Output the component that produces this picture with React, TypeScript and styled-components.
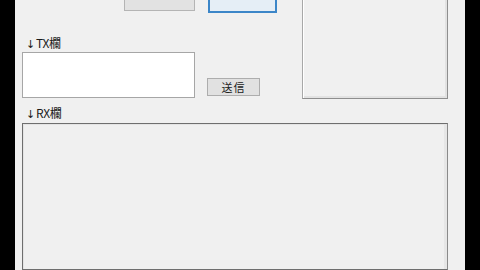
import styled, { createGlobalStyle } from "styled-components";

const GlobalStyle = createGlobalStyle`
  html, body {
    margin: 0;
    padding: 0;
    width: 480px;
    height: 270px;
    overflow: hidden;
    background: #000;
  }
`;

const Screen = styled.div`
  width: 480px;
  height: 270px;
  background: #000;
  display: flex;
  justify-content: flex-start;
  overflow: hidden;
`;

const Window = styled.div`
  margin-left: 15px;
  width: 450px;
  height: 270px;
  background: #f0f0f0;
  padding: 0 17px 0 7px;
  box-sizing: border-box;
  display: flex;
  flex-direction: column;
  font-family: "Noto Sans CJK JP", "Liberation Sans", sans-serif;
  font-size: 12px;
  color: #1a1a1a;
  overflow: hidden;
`;

const TopRow = styled.div`
  display: flex;
  margin-top: -12px;
`;

const LeftColumn = styled.div`
  width: 281px;
  display: flex;
  flex-direction: column;
`;

const ButtonRow = styled.div`
  display: flex;
  height: 24px;
  align-items: flex-start;
`;

const WinButton = styled.div<{ $w: number; $h: number; $ml: number; $focused?: boolean; $disabled?: boolean }>`
  width: ${(p) => p.$w}px;
  height: ${(p) => p.$h}px;
  margin-left: ${(p) => p.$ml}px;
  box-sizing: border-box;
  border: ${(p) => (p.$focused ? "2px solid #3c86c8" : "1px solid #b4b4b4")};
  background: ${(p) => (p.$focused ? "#e5eef6" : p.$disabled ? "#e2e2e2" : "#e1e1e1")};
  display: flex;
  align-items: center;
  justify-content: center;
  font-size: 12px;
  color: #222;
`;

const Label = styled.div<{ $mt: number }>`
  margin-top: ${(p) => p.$mt}px;
  margin-left: 4px;
  height: 15px;
  line-height: 15px;
  font-size: 12px;
  letter-spacing: -0.3px;
`;

const Arrow = styled.span`
  font-family: "DejaVu Sans", sans-serif;
  font-size: 11px;
  color: #1a1a1a;
  margin-right: 1px;
`;

const TxRow = styled.div`
  display: flex;
  align-items: flex-end;
  margin-top: 2px;
`;

const TxBox = styled.div`
  width: 173px;
  height: 46px;
  box-sizing: border-box;
  background: #fff;
  border: 1px solid #a6a6a6;
`;

const SendButton = styled(WinButton)`
  margin-bottom: 2px;
  border-color: #adadad;
  font-size: 11px;
  letter-spacing: 1px;
`;

const SidePanel = styled.div`
  width: 146px;
  height: 111px;
  box-sizing: border-box;
  border: 1px solid #8e8e8e;
  border-top-color: #a8a8a8;
  border-left-color: #a8a8a8;
  box-shadow: inset 1px 1px 0 #fff, inset -2px -2px 0 #e2e2e2;
  background: #f0f0f0;
`;

const RxBox = styled.div`
  width: 426px;
  height: 170px;
  margin-top: 3px;
  box-sizing: border-box;
  border: 1px solid #6e6e6e;
  border-right-color: #8a8a8a;
  box-shadow: inset 1px 1px 0 #e4e4e4, inset -3px 0 0 #e6e6e6;
  background: #f0f0f0;
`;

export default function App() {
  return (
    <Screen>
      <GlobalStyle />
      <Window>
        <TopRow>
          <LeftColumn>
            <ButtonRow>
              <WinButton $w={71} $h={23} $ml={102} $disabled />
              <WinButton $w={69} $h={25} $ml={13} $focused />
            </ButtonRow>
            <Label $mt={23}>
              <Arrow>↓</Arrow>TX欄
            </Label>
            <TxRow>
              <TxBox />
              <SendButton $w={53} $h={18} $ml={12}>
                送信
              </SendButton>
            </TxRow>
          </LeftColumn>
          <SidePanel />
        </TopRow>
        <Label $mt={6}>
          <Arrow>↓</Arrow>RX欄
        </Label>
        <RxBox />
      </Window>
    </Screen>
  );
}
